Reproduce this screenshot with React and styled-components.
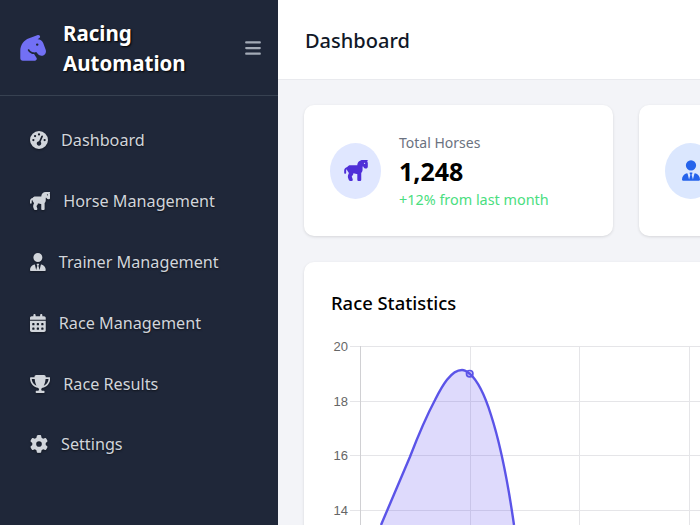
import React from "react";
import styled, { createGlobalStyle } from "styled-components";
import { FaBars, FaCalendarDays, FaGaugeHigh, FaGear, FaHorse, FaHorseHead, FaTrophy, FaUserTie } from "react-icons/fa6";

const GlobalStyle = createGlobalStyle`
  html, body {
    margin: 0;
    padding: 0;
    overflow: hidden;
    background: #f3f4f8;
    font-family: "Noto Sans", "Open Sans", sans-serif;
  }
`;

const Layout = styled.div`
  display: flex;
  width: 700px;
  height: 525px;
  overflow: hidden;
`;

const Sidebar = styled.aside`
  flex: 0 0 278px;
  background: #1f2739;
  display: flex;
  flex-direction: column;
`;

const Brand = styled.div`
  height: 96px;
  flex: none;
  box-sizing: border-box;
  border-bottom: 1px solid #374151;
  display: flex;
  align-items: center;
  padding: 0 17px;
`;

const BrandIcon = styled.div`
  color: #7270f5;
  display: flex;
  margin-right: 13px;
  svg {
    width: 33px;
    height: 33px;
  }
`;

const BrandName = styled.div`
  flex: 1;
  color: #fff;
  font-size: 20.5px;
  font-weight: 700;
  line-height: 30px;
  text-shadow: 1px 1px 2px #000;
`;

const MenuButton = styled.div`
  color: #a3aab6;
  display: flex;
  svg {
    width: 16px;
    height: 18px;
  }
`;

const Nav = styled.nav`
  display: flex;
  flex-direction: column;
  padding-top: 14px;
`;

const NavItem = styled.div`
  height: 60.8px;
  display: flex;
  align-items: center;
  padding-left: 30px;
  gap: 13px;
  color: #d1d5db;
  font-size: 16.2px;
  text-shadow: 0 1px 2px rgba(0, 0, 0, 0.6);
`;

const NavIcon = styled.span`
  flex: none;
  display: flex;
  width: ${(p) => p.$width}px;
  svg {
    width: 100%;
    height: 18px;
    filter: drop-shadow(0 1px 1px rgba(0, 0, 0, 0.4));
  }
`;

const Main = styled.main`
  flex: 1;
  min-width: 0;
  display: flex;
  flex-direction: column;
`;

const Header = styled.header`
  height: 80px;
  flex: none;
  box-sizing: border-box;
  background: #fff;
  border-bottom: 1px solid #e9eaee;
  display: flex;
  align-items: center;
  padding: 2px 0 0 27px;
  font-size: 20px;
  font-weight: 500;
  color: #111827;
`;

const Content = styled.div`
  padding: 25px 0 0 26px;
  display: flex;
  flex-direction: column;
  gap: 26px;
`;

const StatRow = styled.div`
  display: flex;
  gap: 26px;
`;

const StatCard = styled.div`
  flex: none;
  width: 309px;
  height: 131px;
  box-sizing: border-box;
  padding: 0 26px;
  background: #fff;
  border-radius: 10px;
  box-shadow: 0 1px 3px rgba(0, 0, 0, 0.12);
  display: flex;
  align-items: center;
  gap: 18px;
`;

const StatIcon = styled.div`
  flex: none;
  width: 51px;
  height: 56px;
  border-radius: 50%;
  background: ${(p) => p.$bg};
  color: ${(p) => p.$color};
  display: flex;
  align-items: center;
  justify-content: center;
  svg {
    width: ${(p) => p.$iconWidth}px;
    height: 21px;
  }
`;

const StatLabel = styled.div`
  font-size: 14px;
  line-height: 19px;
  color: #6b7280;
`;

const StatValue = styled.div`
  font-size: 25px;
  font-weight: 700;
  line-height: 38px;
  color: #000;
`;

const StatTrend = styled.div`
  font-size: 14.4px;
  line-height: 19px;
  color: #4ade80;
`;

const ChartCard = styled.div`
  flex: none;
  width: 640px;
  height: 400px;
  box-sizing: border-box;
  background: #fff;
  border-radius: 10px;
  box-shadow: 0 1px 3px rgba(0, 0, 0, 0.12);
  padding: 28px 27px;
`;

const ChartTitle = styled.h2`
  margin: 0;
  font-size: 18.4px;
  font-weight: 500;
  line-height: 25px;
  color: #000;
`;

const ChartBox = styled.div`
  margin: 18px 0 0 -27px;
  svg {
    display: block;
  }
`;

const navItems = [
  { label: "Dashboard", icon: FaGaugeHigh, width: 18 },
  { label: "Horse Management", icon: FaHorse, width: 20.25 },
  { label: "Trainer Management", icon: FaUserTie, width: 15.75 },
  { label: "Race Management", icon: FaCalendarDays, width: 15.75 },
  { label: "Race Results", icon: FaTrophy, width: 20.25 },
  { label: "Settings", icon: FaGear, width: 18 },
];

// coordinates inside the chart box, which starts at x 304, y 333
const gridY = [
  { label: "20", y: 13.5 },
  { label: "18", y: 68.5 },
  { label: "16", y: 122.5 },
  { label: "14", y: 177.5 },
];
const gridX = [56.5, 166.5, 275.5, 385.5];
const curve =
  "M77 192 C 87 168 97 145 106 123.7 C 114 103 122 84 131 67 C 138 53 147 37 158 37 C 161 37 163 38.5 165.7 40.7 C 174 48 182 66 187 82 C 196 110 204 150 210 192";

function Chart() {
  return (
    <svg width="396" height="192" viewBox="0 0 396 192">
      {gridY.map((g) => (
        <g key={g.label}>
          <line x1="46" x2="396" y1={g.y} y2={g.y} stroke="#e5e5e8" />
          <text x="44" y={g.y + 4.5} textAnchor="end" fontSize="13" fontFamily="Liberation Sans" fill="#666">
            {g.label}
          </text>
        </g>
      ))}
      {gridX.map((x, i) => (
        <line key={x} x1={x} x2={x} y1="13" y2="192" stroke={i === 0 ? "#d0d0d3" : "#e5e5e8"} />
      ))}
      <path d={curve + " Z"} fill="rgba(90,70,240,0.2)" />
      <path d={curve} fill="none" stroke="#5b54e8" strokeWidth="2.4" />
      <circle cx="165.7" cy="40.7" r="3.2" fill="rgba(90,70,240,0.2)" stroke="#5b54e8" strokeWidth="1.7" />
    </svg>
  );
}

export default function App() {
  return (
    <Layout>
      <GlobalStyle />
      <Sidebar>
        <Brand>
          <BrandIcon>
            <FaHorseHead />
          </BrandIcon>
          <BrandName>
            Racing
            <br />
            Automation
          </BrandName>
          <MenuButton>
            <FaBars />
          </MenuButton>
        </Brand>
        <Nav>
          {navItems.map(({ label, icon: Icon, width }) => (
            <NavItem key={label}>
              <NavIcon $width={width}>
                <Icon />
              </NavIcon>
              {label}
            </NavItem>
          ))}
        </Nav>
      </Sidebar>
      <Main>
        <Header>Dashboard</Header>
        <Content>
          <StatRow>
            <StatCard>
              <StatIcon $bg="#e0e7ff" $color="#4f2fd8" $iconWidth={24}>
                <FaHorse />
              </StatIcon>
              <div>
                <StatLabel>Total Horses</StatLabel>
                <StatValue>1,248</StatValue>
                <StatTrend>+12% from last month</StatTrend>
              </div>
            </StatCard>
            <StatCard>
              <StatIcon $bg="#dbe7fe" $color="#2563eb" $iconWidth={18}>
                <FaUserTie />
              </StatIcon>
            </StatCard>
          </StatRow>
          <ChartCard>
            <ChartTitle>Race Statistics</ChartTitle>
            <ChartBox>
              <Chart />
            </ChartBox>
          </ChartCard>
        </Content>
      </Main>
    </Layout>
  );
}
